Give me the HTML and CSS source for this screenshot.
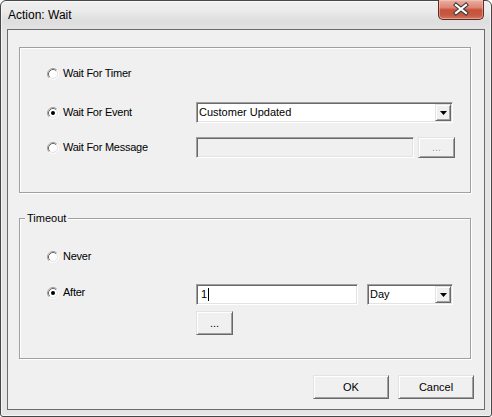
FILE: index.html
```html
<!DOCTYPE html>
<html>
<head>
<meta charset="utf-8">
<title>Action: Wait</title>
<link rel="stylesheet" href="styles.css">
</head>
<body>
<div class="window">
  <div class="titlebar">
    <span class="title">Action: Wait</span>
    <span class="close">
      <svg width="46" height="20" viewBox="0 0 46 20">
        <path d="M18 6L28 14M28 6L18 14" stroke="#3b3b3b" stroke-width="4.2" stroke-linecap="square" fill="none"/>
        <path d="M18 6L28 14M28 6L18 14" stroke="#ffffff" stroke-width="2.2" stroke-linecap="square" fill="none"/>
      </svg>
    </span>
  </div>
  <div class="client">
    <div class="group group-wait">
      <div class="row">
        <label class="opt">
          <svg class="radio" viewBox="0 0 12 12"><circle cx="6" cy="6" r="5" fill="#fff"/><path d="M2.11 9.89A5.5 5.5 0 0 1 9.89 2.11" fill="none" stroke="#a0a0a0"/><path d="M2.82 9.18A4.5 4.5 0 0 1 9.18 2.82" fill="none" stroke="#696969"/><path d="M9.89 2.11A5.5 5.5 0 0 1 2.11 9.89" fill="none" stroke="#ffffff"/><path d="M9.18 2.82A4.5 4.5 0 0 1 2.82 9.18" fill="none" stroke="#e3e3e3"/></svg>
          <span>Wait For Timer</span>
        </label>
      </div>
      <div class="row row-event">
        <label class="opt">
          <svg class="radio" viewBox="0 0 12 12"><circle cx="6" cy="6" r="5" fill="#fff"/><path d="M2.11 9.89A5.5 5.5 0 0 1 9.89 2.11" fill="none" stroke="#a0a0a0"/><path d="M2.82 9.18A4.5 4.5 0 0 1 9.18 2.82" fill="none" stroke="#696969"/><path d="M9.89 2.11A5.5 5.5 0 0 1 2.11 9.89" fill="none" stroke="#ffffff"/><path d="M9.18 2.82A4.5 4.5 0 0 1 2.82 9.18" fill="none" stroke="#e3e3e3"/><circle cx="6" cy="6" r="2" fill="#000"/></svg>
          <span>Wait For Event</span>
        </label>
        <div class="field combo combo-event">
          <span class="combo-text">Customer Updated</span>
          <span class="drop"><svg width="7" height="4" viewBox="0 0 7 4"><path d="M0 0H7L3.5 4Z" fill="#000"/></svg></span>
        </div>
      </div>
      <div class="row row-msg">
        <label class="opt">
          <svg class="radio" viewBox="0 0 12 12"><circle cx="6" cy="6" r="5" fill="#fff"/><path d="M2.11 9.89A5.5 5.5 0 0 1 9.89 2.11" fill="none" stroke="#a0a0a0"/><path d="M2.82 9.18A4.5 4.5 0 0 1 9.18 2.82" fill="none" stroke="#696969"/><path d="M9.89 2.11A5.5 5.5 0 0 1 2.11 9.89" fill="none" stroke="#ffffff"/><path d="M9.18 2.82A4.5 4.5 0 0 1 2.82 9.18" fill="none" stroke="#e3e3e3"/></svg>
          <span>Wait For Message</span>
        </label>
        <div class="field field-msg"></div>
        <div class="btn btn-ellipsis btn-disabled">...</div>
      </div>
    </div>

    <div class="group group-timeout">
      <div class="legend">Timeout</div>
      <div class="row row-never">
        <label class="opt">
          <svg class="radio" viewBox="0 0 12 12"><circle cx="6" cy="6" r="5" fill="#fff"/><path d="M2.11 9.89A5.5 5.5 0 0 1 9.89 2.11" fill="none" stroke="#a0a0a0"/><path d="M2.82 9.18A4.5 4.5 0 0 1 9.18 2.82" fill="none" stroke="#696969"/><path d="M9.89 2.11A5.5 5.5 0 0 1 2.11 9.89" fill="none" stroke="#ffffff"/><path d="M9.18 2.82A4.5 4.5 0 0 1 2.82 9.18" fill="none" stroke="#e3e3e3"/></svg>
          <span>Never</span>
        </label>
      </div>
      <div class="row row-after">
        <label class="opt">
          <svg class="radio" viewBox="0 0 12 12"><circle cx="6" cy="6" r="5" fill="#fff"/><path d="M2.11 9.89A5.5 5.5 0 0 1 9.89 2.11" fill="none" stroke="#a0a0a0"/><path d="M2.82 9.18A4.5 4.5 0 0 1 9.18 2.82" fill="none" stroke="#696969"/><path d="M9.89 2.11A5.5 5.5 0 0 1 2.11 9.89" fill="none" stroke="#ffffff"/><path d="M9.18 2.82A4.5 4.5 0 0 1 2.82 9.18" fill="none" stroke="#e3e3e3"/><circle cx="6" cy="6" r="2" fill="#000"/></svg>
          <span>After</span>
        </label>
        <div class="field field-num"><span>1</span><span class="caret"></span></div>
        <div class="field combo combo-day">
          <span class="combo-text">Day</span>
          <span class="drop"><svg width="7" height="4" viewBox="0 0 7 4"><path d="M0 0H7L3.5 4Z" fill="#000"/></svg></span>
        </div>
      </div>
      <div class="row row-more">
        <div class="btn btn-more">...</div>
      </div>
    </div>

    <div class="actions">
      <div class="btn btn-action">OK</div>
      <div class="btn btn-action">Cancel</div>
    </div>
  </div>
</div>
</body>
</html>
```

FILE: styles.css
```css
* { box-sizing: border-box; }

html, body {
  margin: 0;
  padding: 0;
}

body {
  width: 492px;
  height: 417px;
  overflow: hidden;
  background: #ffffff;
  font-family: "Liberation Sans", Arial, sans-serif;
  font-size: 11px;
  line-height: 13px;
  color: #000000;
}

.window {
  width: 492px;
  height: 417px;
  border: 1px solid #474747;
  border-radius: 6px 6px 3px 3px;
  background: linear-gradient(#efefef 0px, #ebebeb 10px, #dedede 20px, #e3e3e3 28px, #e5e5e5 100%);
  box-shadow: inset 0 0 0 1px rgba(255, 255, 255, 0.6);
  padding: 0 6px 6px 6px;
  display: flex;
  flex-direction: column;
}

.titlebar {
  height: 28px;
  flex: none;
  display: flex;
  justify-content: space-between;
  align-items: flex-start;
  padding-left: 1px;
}

.title {
  font-size: 12px;
  line-height: 14px;
  margin-top: 7px;
  color: #000000;
}

.close {
  width: 46px;
  height: 20px;
  margin-top: -1px;
  margin-right: 1px;
  border: 1px solid #5e2a21;
  border-top: none;
  border-radius: 0 0 5px 5px;
  background: linear-gradient(#eab0a3 0%, #dd8573 40%, #c9503a 52%, #c45a45 80%, #d27a62 100%);
  box-shadow: inset 0 0 0 1px rgba(255, 210, 200, 0.45);
  display: flex;
  align-items: center;
  justify-content: center;
  overflow: hidden;
}

.close svg {
  display: block;
  flex: none;
  margin-top: -1px;
}

.client {
  height: 381px;
  flex: none;
  border: 1px solid #6b6b6b;
  background: #f0f0f0;
}

.group {
  margin-left: 11px;
  width: 452px;
  border: 1px solid #a0a0a0;
  box-shadow: inset 1px 1px 0 #ffffff, 1px 1px 0 #ffffff;
}

.group-wait {
  margin-top: 17px;
  height: 146px;
  padding-top: 15px;
}

.group-timeout {
  margin-top: 25px;
  height: 141px;
}

.legend {
  display: table;
  margin: -7px 0 0 5px;
  padding: 0 2px;
  background: #f0f0f0;
  line-height: 13px;
}

.row {
  display: flex;
  align-items: center;
  height: 21px;
  padding-left: 27px;
}

.row-event { margin-top: 18px; }
.row-msg { margin-top: 14px; }
.row-never { margin-top: 21px; }
.row-after { margin-top: 17px; align-items: flex-start; }
.row-more { margin-top: 6px; height: 24px; padding-left: 176px; }

.opt {
  width: 149px;
  flex: none;
  display: flex;
  align-items: center;
  gap: 4px;
  letter-spacing: -0.25px;
}

.row-after .opt { height: 17px; }

.radio {
  width: 12px;
  height: 12px;
  flex: none;
  display: block;
}

.field {
  height: 21px;
  flex: none;
  border: 1px solid;
  border-color: #a0a0a0 #ffffff #ffffff #a0a0a0;
  box-shadow: inset 1px 1px 0 #696969, inset -1px -1px 0 #e3e3e3;
  background: #ffffff;
  display: flex;
  align-items: center;
}

.combo {
  justify-content: space-between;
  align-items: stretch;
  padding: 1px 1px 1px 2px;
}

.combo-text {
  display: flex;
  align-items: center;
}

.combo-event { width: 257px; }
.combo-day { width: 86px; margin-left: 9px; }

.drop {
  width: 16px;
  flex: none;
  background: #f0f0f0;
  border: 1px solid;
  border-color: #e3e3e3 #696969 #696969 #e3e3e3;
  box-shadow: inset 1px 1px 0 #ffffff, inset -1px -1px 0 #a0a0a0;
  display: flex;
  align-items: center;
  justify-content: center;
}

.drop svg { display: block; margin-top: 1px; }

.field-msg {
  width: 218px;
  background: #f0f0f0;
}

.field-num {
  width: 162px;
  padding-left: 4px;
}

.caret {
  width: 1px;
  height: 13px;
  margin-left: 1px;
  background: #000000;
}

.btn {
  flex: none;
  background: #f0f0f0;
  border: 1px solid;
  border-color: #e3e3e3 #696969 #696969 #e3e3e3;
  box-shadow: inset 1px 1px 0 #ffffff, inset -1px -1px 0 #a0a0a0;
  display: flex;
  align-items: center;
  justify-content: center;
  color: #000000;
}

.btn-ellipsis {
  width: 37px;
  height: 21px;
  margin-left: 4px;
}

.btn-disabled {
  color: #a0a0a0;
  text-shadow: 1px 1px 0 #ffffff;
}

.btn-more {
  width: 37px;
  height: 24px;
}

.actions {
  display: flex;
  justify-content: flex-end;
  gap: 9px;
  margin-top: 16px;
  padding-right: 10px;
}

.btn-action {
  width: 76px;
  height: 24px;
}
```
